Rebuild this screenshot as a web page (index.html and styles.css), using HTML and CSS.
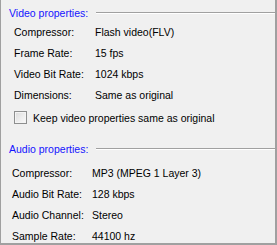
FILE: index.html
```html
<!DOCTYPE html>
<html lang="en">
<head>
    <meta charset="UTF-8">
    <title>Output properties</title>
    <link rel="stylesheet" href="styles.css">
</head>
<body>
    <div class="panel">
        <div class="group-head video-head">
            <span class="group-title">Video properties:</span>
            <span class="rule"></span>
        </div>
        <div class="props video-props">
            <span>Compressor:</span><span>Flash video(FLV)</span>
            <span>Frame Rate:</span><span>15 fps</span>
            <span>Video Bit Rate:</span><span>1024 kbps</span>
            <span>Dimensions:</span><span>Same as original</span>
        </div>
        <label class="check">
            <span class="box"></span>
            <span>Keep video properties same as original</span>
        </label>

        <div class="group-head audio-head">
            <span class="group-title">Audio properties:</span>
            <span class="rule"></span>
        </div>
        <div class="props audio-props">
            <span>Compressor:</span><span>MP3 (MPEG 1 Layer 3)</span>
            <span>Audio Bit Rate:</span><span>128 kbps</span>
            <span>Audio Channel:</span><span>Stereo</span>
            <span>Sample Rate:</span><span>44100 hz</span>
        </div>
    </div>
</body>
</html>
```

FILE: styles.css
```css
body {
    margin: 0;
    padding: 0;
    background-color: #f0f0f0;
    font-family: 'Liberation Sans', Arial, sans-serif;
    font-size: 10.5px;
    color: #000;
}
.panel {
    box-sizing: border-box;
    width: 277px;
    height: 245px;
    padding-top: 6px;
    border-left: 1px solid #a0a0a0;
    border-right: 2px solid #a0a0a0;
    border-bottom: 2px solid #a0a0a0;
    overflow: hidden;
}
.group-head {
    display: flex;
    align-items: center;
    height: 14px;
    padding-left: 8px;
}
.group-title {
    color: #1414ff;
    white-space: nowrap;
}
.rule {
    flex: 1;
    margin-left: 8px;
    border-top: 1px solid #a0a0a0;
    border-bottom: 1px solid #fff;
}
.props {
    display: grid;
    grid-auto-rows: 21px;
    align-items: center;
    white-space: nowrap;
}
.video-props {
    margin-top: 1px;
    padding-left: 13px;
    grid-template-columns: 81px 1fr;
}
.audio-props {
    margin-top: 6px;
    padding-left: 11px;
    grid-template-columns: 80px 1fr;
}
.check {
    display: flex;
    align-items: center;
    gap: 6px;
    height: 13px;
    margin-top: 6px;
    padding-left: 13px;
}
.box {
    box-sizing: border-box;
    width: 13px;
    height: 13px;
    border: 1px solid #8e8f8f;
    background: linear-gradient(135deg, #dcdcdc, #fbfbfb);
    box-shadow: inset 0 0 0 1px #f4f4f4;
}
.audio-head {
    margin-top: 18px;
}
```
